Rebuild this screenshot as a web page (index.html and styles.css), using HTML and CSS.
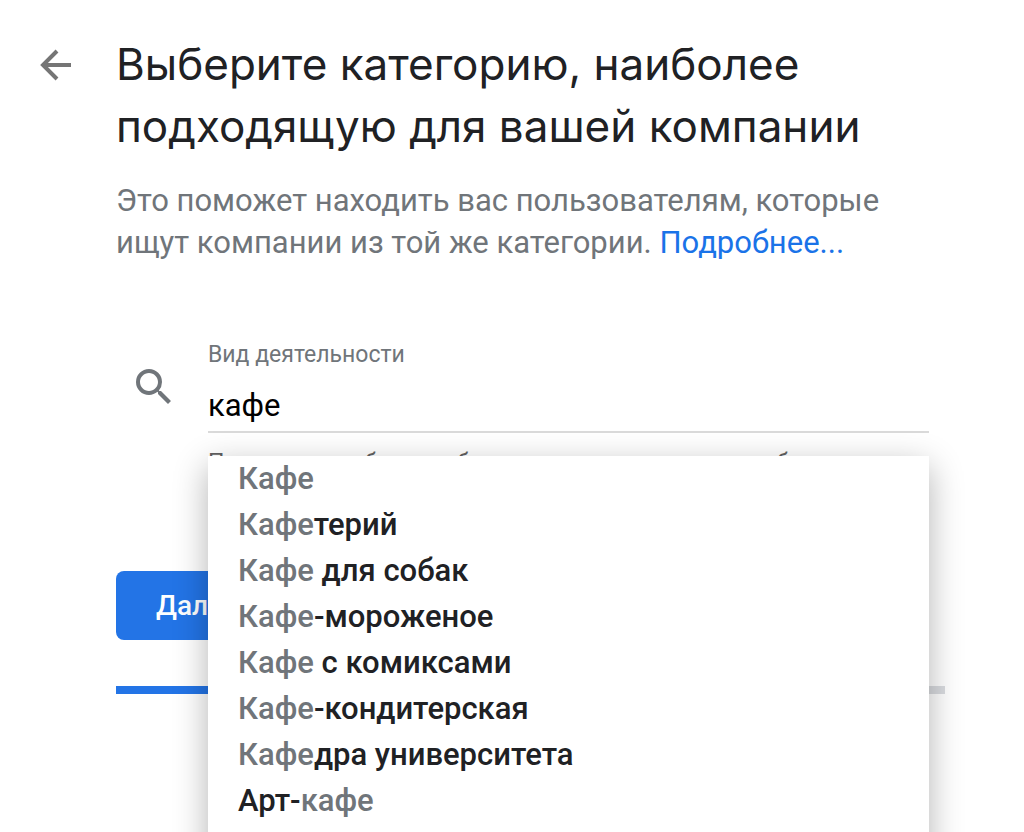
FILE: index.html
```html
<!DOCTYPE html>
<html lang="ru">
<head>
<meta charset="utf-8">
<meta name="viewport" content="width=device-width, initial-scale=1">
<title>Выбор категории компании</title>
<link rel="stylesheet" href="styles.css">
</head>
<body>
<div class="page">
  <button class="back" type="button" aria-label="Назад">
    <svg viewBox="0 0 32 32" fill="none" stroke="currentColor" stroke-width="4"><path d="M31 16H4M17 2L3 16l14 14"/></svg>
  </button>
  <main class="content">
    <h1 class="title">Выберите категорию, наиболее подходящую для вашей компании</h1>
    <p class="intro">Это поможет находить вас пользователям, которые ищут компании из той же категории. <a class="link" href="#">Подробнее...</a></p>
    <form class="form">
      <div class="search">
        <svg class="search-icon" viewBox="3 3 18 18" fill="currentColor" aria-hidden="true"><path d="M15.5 14h-.79l-.28-.27A6.471 6.471 0 0 0 16 9.500 6.500 6.500 0 1 0 9.500 16c1.610 0 3.090-.59 4.230-1.570l.27.28v.79l5 4.990L20.490 19l-4.990-5zm-6 0C7.010 14 5 11.990 5 9.500S7.010 5 9.500 5 14 7.010 14 9.500 11.990 14 9.500 14z"/></svg>
        <div class="field">
          <label class="label" for="activity">Вид деятельности</label>
          <input class="input" id="activity" type="text" value="кафе" autocomplete="off">
          <p class="hint">Позже можно будет добавить другие и изменить выбор</p>
          <ul class="menu" role="listbox" aria-label="Вид деятельности">
            <li class="option" role="option"><span class="match">Кафе</span></li>
            <li class="option" role="option"><span class="match">Кафе</span>терий</li>
            <li class="option" role="option"><span class="match">Кафе</span> для собак</li>
            <li class="option" role="option"><span class="match">Кафе</span>-мороженое</li>
            <li class="option" role="option"><span class="match">Кафе</span> с комиксами</li>
            <li class="option" role="option"><span class="match">Кафе</span>-кондитерская</li>
            <li class="option" role="option"><span class="match">Кафе</span>дра университета</li>
            <li class="option" role="option">Арт-<span class="match">кафе</span></li>
          </ul>
        </div>
      </div>
      <button class="next" type="button">Далее</button>
    </form>
    <div class="progress" role="progressbar" aria-label="Ход регистрации" aria-valuenow="40" aria-valuemin="0" aria-valuemax="100"><div class="progress-bar" style="width:40%"></div></div>
  </main>
</div>
</body>
</html>
```
FILE: styles.css
```css
* {
  box-sizing: border-box;
}

body {
  margin: 0;
  background: #fff;
  color: #202124;
  font-family: Roboto, "Noto Sans", sans-serif;
  font-size: 31px;
}

.page {
  display: flex;
  align-items: flex-start;
  gap: 44px;
  min-height: 100vh;
  padding: 33px 79px 0 40px;
  overflow: hidden;
}

.back {
  flex: none;
  width: 32px;
  height: 32px;
  margin-top: 16px;
  padding: 0;
  border: 0;
  background: none;
  color: #757575;
}

.back svg {
  display: block;
}

.content {
  flex: 1;
  min-width: 0;
}

.title {
  margin: 0;
  font-family: Inter, Roboto, sans-serif;
  font-size: 44px;
  font-weight: 400;
  line-height: 62px;
}

.intro {
  max-width: 800px;
  margin: 23px 0 0;
  color: #70757a;
  line-height: 42px;
}

.link {
  color: #1a73e8;
  text-decoration: none;
}

.form {
  margin-top: 77px;
}

.search {
  display: flex;
  align-items: flex-start;
  gap: 36px;
  padding: 0 16px 0 20px;
}

.search-icon {
  flex: none;
  width: 36px;
  height: 36px;
  margin-top: 28px;
  color: #70757a;
}

.field {
  position: relative;
  flex: 1;
  min-width: 0;
}

.label {
  display: block;
  color: #70757a;
  font-size: 23px;
  line-height: 28px;
}

.input {
  display: block;
  width: 100%;
  height: 64px;
  padding: 10px 0 0;
  border: 0;
  border-bottom: 2px solid #dadada;
  outline: 0;
  background: none;
  color: #000;
  font: inherit;
}

.hint {
  margin: 16px 0 0;
  color: #616161;
  font-size: 23px;
  line-height: 28px;
  white-space: nowrap;
}

.menu {
  position: absolute;
  top: 115px;
  left: 0;
  right: 0;
  z-index: 1;
  min-height: 420px;
  margin: 0;
  padding: 0;
  background: #fff;
  box-shadow: 0 10px 32px rgba(0, 0, 0, 0.3);
  list-style: none;
}

.option {
  padding: 0 30px;
  font-weight: 500;
  line-height: 46px;
}

.match {
  color: #70757a;
}

.next {
  display: block;
  height: 69px;
  margin-top: 94px;
  padding: 0 40px;
  border: 0;
  border-radius: 8px;
  background: #2374e6;
  color: #fff;
  font-family: Roboto, sans-serif;
  font-size: 28px;
  font-weight: 500;
}

.progress {
  height: 8px;
  margin-top: 46px;
  background: #dadce0;
}

.progress-bar {
  height: 100%;
  background: #2374e6;
}
```
